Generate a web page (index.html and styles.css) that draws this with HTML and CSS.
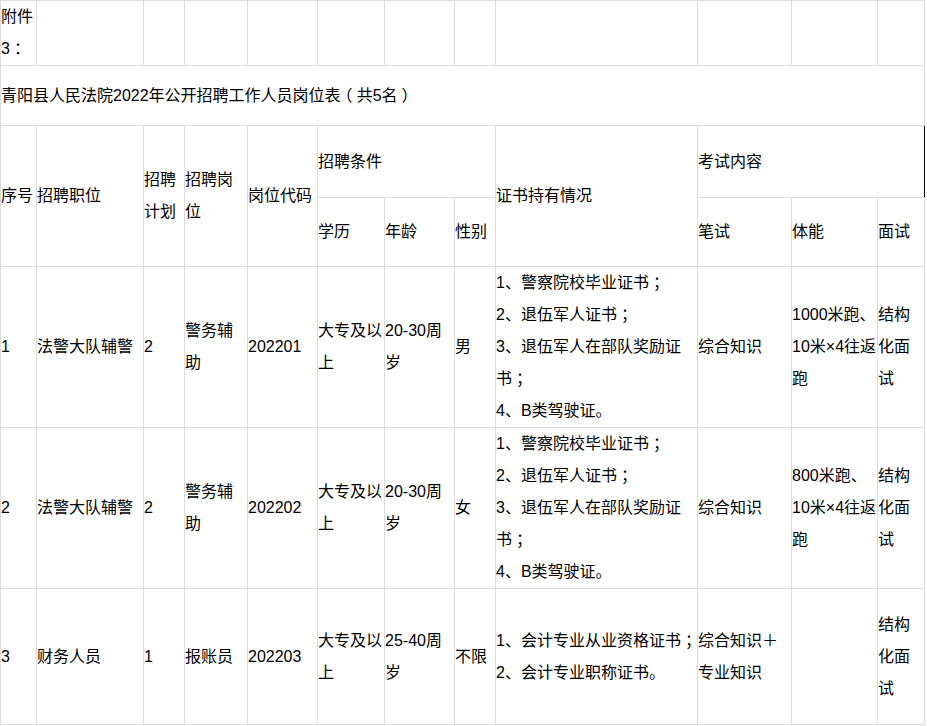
FILE: index.html
```html
<!DOCTYPE html>
<html lang="zh-CN">
<head>
<meta charset="utf-8">
<title>青阳县人民法院2022年公开招聘工作人员岗位表</title>
<link rel="stylesheet" href="styles.css">
</head>
<body>
<table class="jobs">
  <colgroup>
    <col class="c1"><col class="c2"><col class="c3"><col class="c4"><col class="c5"><col class="c6">
    <col class="c7"><col class="c8"><col class="c9"><col class="c10"><col class="c11"><col class="c12">
  </colgroup>
  <tbody>
    <tr class="r-attach">
      <td>附件3<span class="fw">：</span></td><td></td><td></td><td></td><td></td><td></td><td></td><td></td><td></td><td></td><td></td><td></td>
    </tr>
    <tr class="r-title">
      <td colspan="12">青阳县人民法院2022年公开招聘工作人员岗位表<span class="fw">（</span>共5名<span class="fw">）</span></td>
    </tr>
    <tr class="r-head">
      <td rowspan="2">序号</td>
      <td rowspan="2">招聘职位</td>
      <td rowspan="2">招聘计划</td>
      <td rowspan="2">招聘岗位</td>
      <td rowspan="2">岗位代码</td>
      <td colspan="3">招聘条件</td>
      <td rowspan="2">证书持有情况</td>
      <td colspan="3" class="exam">考试内容</td>
    </tr>
    <tr class="r-sub">
      <td>学历</td><td>年龄</td><td>性别</td>
      <td>笔试</td><td>体能</td><td>面试</td>
    </tr>
    <tr class="r-body">
      <td>1</td><td>法警大队辅警</td><td>2</td><td>警务辅助</td><td>202201</td>
      <td>大专及以上</td><td>20-30周岁</td><td>男</td>
      <td>1、警察院校毕业证书<span class="fw">；</span><br>2、退伍军人证书<span class="fw">；</span><br>3、退伍军人在部队奖励证书<span class="fw">；</span><br>4、B类驾驶证。</td>
      <td>综合知识</td><td>1000米跑、10米×4往返跑</td><td>结构化面试</td>
    </tr>
    <tr class="r-body">
      <td>2</td><td>法警大队辅警</td><td>2</td><td>警务辅助</td><td>202202</td>
      <td>大专及以上</td><td>20-30周岁</td><td>女</td>
      <td>1、警察院校毕业证书<span class="fw">；</span><br>2、退伍军人证书<span class="fw">；</span><br>3、退伍军人在部队奖励证书<span class="fw">；</span><br>4、B类驾驶证。</td>
      <td>综合知识</td><td>800米跑、10米×4往返跑</td><td>结构化面试</td>
    </tr>
    <tr class="r-last">
      <td>3</td><td>财务人员</td><td>1</td><td>报账员</td><td>202203</td>
      <td>大专及以上</td><td>25-40周岁</td><td>不限</td>
      <td class="nowrap">1、会计专业从业资格证书<span class="fw">；</span><br>2、会计专业职称证书。</td>
      <td>综合知识＋专业知识</td><td></td><td>结构化面试</td>
    </tr>
  </tbody>
</table>
</body>
</html>
```
FILE: styles.css
```css
html, body {
  margin: 0;
  padding: 0;
  background: #fff;
}

.jobs {
  border-collapse: collapse;
  table-layout: fixed;
  width: 924px;
  font-family: "Liberation Sans", "Noto Sans CJK SC", sans-serif;
  font-size: 16px;
  line-height: 32px;
  color: #000;
}

.jobs td {
  border: 1px solid #dcdcdc;
  padding: 0;
  vertical-align: middle;
  text-align: left;
  word-break: normal;
}

/* full-width punctuation drawn centred in its em box */
.fw {
  font-feature-settings: "halt";
  padding: 0 0.25em;
}

.c1 { width: 36px; }
.c2 { width: 107px; }
.c3 { width: 41px; }
.c4 { width: 63px; }
.c5 { width: 70px; }
.c6 { width: 67px; }
.c7 { width: 70px; }
.c8 { width: 41px; }
.c9 { width: 202px; }
.c10 { width: 94px; }
.c11 { width: 86px; }
.c12 { width: 47px; }

.r-attach { height: 65px; }
.r-title { height: 60px; }
.r-head { height: 72px; }
.r-sub { height: 69px; }
.r-body { height: 161px; }
.r-last { height: 136px; }

.jobs td.exam {
  border-right: 1px solid #000;
}

.nowrap {
  white-space: nowrap;
}
```
